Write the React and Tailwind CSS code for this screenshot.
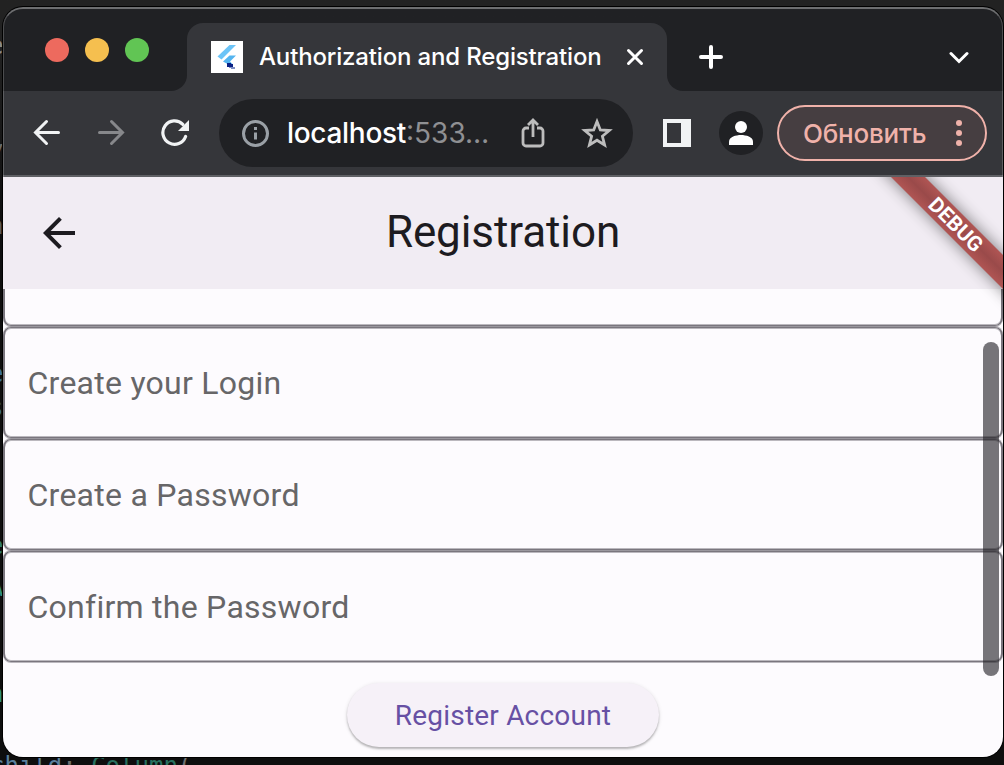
const fields = ['Create your Login', 'Create a Password', 'Confirm the Password'];

const fieldBox =
  'rounded-[8px] border-x-2 border-y border-[#7a767e] shadow-[0_1px_0_#7a767e80,0_-1px_0_#7a767e80,inset_0_1px_0_#7a767e80,inset_0_-1px_0_#7a767e80]';

const gutter = [
  ['e', 32, '#8a8a8a'],
  ['y', 136, '#6a6a6a'],
  ['n', 212, '#5c5c5c'],
  ['e', 360, '#3a6d94'],
  ['s', 394, '#3a6d94'],
  ['e', 532, '#2f7a68'],
  ['A', 574, '#2f8f78'],
  ['n', 680, '#2f8f78'],
];

function Favicon() {
  return (
    <svg className="h-8 w-8 shrink-0 bg-white" viewBox="0 0 32 32">
      <path d="M18.500 4H25L10.500 18.500 6.500 15.500z" fill="#6cc4f7" />
      <path d="M18.500 14.500H25L19 20.500l2.500 2.500h-5L12 20.500z" fill="#55b5f0" />
      <path d="M16 22h4v1h2v3h-6z" fill="#0b2185" />
      <path d="M18 26v1h2v1h4v-2z" fill="#7d8fc4" />
    </svg>
  );
}

function TabStrip() {
  return (
    <div className="flex h-[84px] bg-[#35363a]">
      <div className="flex w-[184px] gap-4 rounded-br-[16px] bg-[#202124] pl-[42px] pt-[31px]">
        <span className="h-6 w-6 rounded-full bg-[#ed6a5e]" />
        <span className="h-6 w-6 rounded-full bg-[#f5bf4f]" />
        <span className="h-6 w-6 rounded-full bg-[#61c554]" />
      </div>
      <div className="w-[480px] bg-linear-to-b from-[#202124] from-50% to-[#35363a] to-50% pt-4">
        <div className="flex h-[68px] items-center rounded-t-[16px] bg-[#35363a] pl-6">
          <Favicon />
          <span className="ml-4 w-[367px] whitespace-nowrap font-[Inter,sans-serif] text-[24px] font-medium tracking-[-0.16px] text-white">
            Authorization and Registration
          </span>
          <svg className="h-[18px] w-[18px]" viewBox="0 0 18 18" stroke="#fff" strokeWidth="3" strokeLinecap="round">
            <path d="M2.500 2.500l13 13M15.500 2.500l-13 13" />
          </svg>
        </div>
      </div>
      <div className="flex flex-1 items-center justify-between rounded-bl-[16px] bg-[#202124] pl-8 pr-[34px] pt-4">
        <svg className="h-6 w-6" viewBox="0 0 24 24" stroke="#fff" strokeWidth="4" strokeLinecap="round">
          <path d="M2 12h20M12 2v20" />
        </svg>
        <svg className="h-5 w-5" viewBox="0 0 20 20" fill="none" stroke="#fff" strokeWidth="3">
          <path d="M2 6.500l8 8 8-8" strokeLinecap="round" />
        </svg>
      </div>
    </div>
  );
}

function Toolbar() {
  return (
    <div className="flex h-[86px] items-center border-b-2 border-[#5f6064] bg-[#35363a] pl-[30px] pr-4">
      <svg className="h-7 w-7" viewBox="0 0 28 28" fill="none" stroke="#f1f3f4" strokeWidth="3" strokeLinecap="round">
        <path d="M25.500 13.500H3M13.500 2.500l-11 11 11 11" />
      </svg>
      <svg className="ml-9 h-7 w-7" viewBox="0 0 28 28" fill="none" stroke="#87888b" strokeWidth="3" strokeLinecap="round">
        <path d="M2.500 13.500H25M14.500 2.500l11 11-11 11" />
      </svg>
      <svg className="ml-9 h-7 w-7" viewBox="0 0 28 28" fill="none">
        <path d="M24.600 17.500A11.700 11.700 0 1 1 21.800 5.300" stroke="#f1f3f4" strokeWidth="3.200" strokeLinecap="round" />
        <path d="M28 1v11H17z" fill="#f1f3f4" />
      </svg>
      <div className="ml-[30px] flex h-[68px] w-[414px] items-center rounded-full bg-[#202124] pl-[22px]">
        <svg className="h-[28px] w-[28px] shrink-0" viewBox="0 0 28 28">
          <circle cx="14.500" cy="14.500" r="12" fill="none" stroke="#9aa0a6" strokeWidth="3" />
          <path d="M13 13.500h3v7h-3zM13 8h3v3h-3z" fill="#9aa0a6" />
        </svg>
        <span className="ml-[18px] w-[232px] whitespace-nowrap font-[Inter,sans-serif] text-[28px] tracking-[0px] text-white">
          <span className="font-medium tracking-[-0.3px]">localhost</span>
          <span className="text-[#8f9093]">:533…</span>
        </span>
        <svg className="ml-[2px] h-8 w-6" viewBox="0 0 24 32" fill="none" stroke="#bdbdbd" strokeWidth="2.800">
          <path d="M8 11H5a3 3 0 0 0-3 3v12a3 3 0 0 0 3 3h14a3 3 0 0 0 3-3V14a3 3 0 0 0-3-3h-3M12 20V3.500M7 8l5-5 5 5" />
        </svg>
        <svg className="ml-[36px] h-8 w-8" viewBox="0 0 32 32" fill="none" stroke="#bdbdbd" strokeWidth="2.800">
          <path d="M16 4.500l3.300 8.400 9 .6-6.900 5.800 2.200 8.700-7.600-4.800L8.400 28l2.200-8.700-6.900-5.800 9-.6z" />
        </svg>
      </div>
      <svg className="ml-[30px] h-7 w-7" viewBox="0 0 28 28">
        <path d="M0 0h28v28H0zM4 4v20h14V4z" fill="#f1f3f4" fillRule="evenodd" />
      </svg>
      <span className="ml-7 flex h-11 w-11 items-center justify-center rounded-full bg-[#202124]">
        <svg className="h-6 w-6" viewBox="0 0 24 24" fill="#fff">
          <circle cx="12" cy="6" r="6" />
          <path d="M0 24v-3.500C0 16 7 14 12 14s12 2 12 6.500V24z" />
        </svg>
      </span>
      <div className="ml-[14px] flex h-14 w-[210px] items-center justify-between rounded-full border-2 border-[#f0b2aa] bg-[#463e41] pl-6 pr-[23px] text-[#f0b2aa]">
        <span className="whitespace-nowrap font-[Inter,sans-serif] text-[26px] font-medium tracking-[-0.2px]">Обновить</span>
        <svg className="h-[26px] w-[6px]" viewBox="0 0 6 26" fill="currentColor">
          <circle cx="3" cy="3" r="3" />
          <circle cx="3" cy="13" r="3" />
          <circle cx="3" cy="23" r="3" />
        </svg>
      </div>
    </div>
  );
}

function DebugBanner() {
  return (
    <div className="absolute right-0 top-0 h-[150px] w-[150px] overflow-hidden">
      <div className="absolute left-[2px] top-[35px] h-6 w-[200px] rotate-45 bg-black/50 blur-[8px]" />
      <div className="absolute left-[2px] top-[35px] flex h-6 w-[200px] rotate-45 items-center justify-center bg-linear-to-b from-[#b05553] via-[#9a4a4a] to-[#b05553] pl-[2px] font-[Roboto,sans-serif] text-[21px] font-bold leading-none text-white">
        DEBUG
      </div>
    </div>
  );
}

function RegistrationPage() {
  return (
    <div className="relative flex-1 bg-[#fdfbfe] font-[Roboto,sans-serif]">
      <header className="flex h-28 items-center bg-[#f1ecf3] pl-10">
        <svg className="h-8 w-8 text-[#1d1b20]" viewBox="4 4 16 16" fill="currentColor">
          <path d="M20 11H7.830l5.590-5.590L12 4l-8 8 8 8 1.410-1.410L7.830 13H20v-2z" />
        </svg>
        <h1 className="flex-1 pb-[2px] pr-[72px] text-center text-[44px] leading-none tracking-[-0.1px] text-[#1d1b20]">
          Registration
        </h1>
      </header>
      <div className="flex flex-col">
        <div className="h-[38px] overflow-hidden">
          <div className={'-mt-[74px] h-[111px] ' + fieldBox} />
        </div>
        {fields.map((label) => (
          <div key={label} className={'mb-px flex h-[111px] items-center pl-[22.5px] text-[32px] tracking-[0.26px] text-[#676668] ' + fieldBox}>
            {label}
          </div>
        ))}
      </div>
      <div className="flex justify-center pt-[20px]">
        <button className="h-16 w-[312px] rounded-full bg-[#f6f1f8] pt-[2px] text-[28px] tracking-[0.2px] text-[#6750a4] shadow-[0_2px_2px_rgba(0,0,0,0.22),0_1px_4px_rgba(0,0,0,0.12)]">
          Register Account
        </button>
      </div>
      <div className="absolute right-1 top-[165px] h-[334px] w-4 rounded-full bg-[#1d1b20]/60" />
      <DebugBanner />
    </div>
  );
}

export default function App() {
  return (
    <div className="relative h-[765px] w-[1004px] overflow-hidden bg-linear-to-b from-[#222222] from-5% to-[#0e0e0e] to-30% pl-[3px] pt-[7px]">
      {gutter.map(([ch, top, color], i) => (
        <span
          key={i}
          className="absolute left-[-11px] font-['DejaVu_Sans_Mono',monospace] text-[24px] leading-[28px]"
          style={{ top, color }}
        >
          {ch}
        </span>
      ))}
      <span className="absolute left-[-10px] top-[752px] whitespace-pre font-['DejaVu_Sans_Mono',monospace] text-[24px] leading-[28px] text-[#5a7f9c]">
        child<span className="text-[#707070]">: </span>
        <span className="text-[#28705f]">Column</span>
        <span className="text-[#707070]">(</span>
      </span>
      <div className="relative flex h-[750px] w-[1000px] flex-col overflow-hidden rounded-[20px] shadow-[0_0_0_1px_#000]">
        <TabStrip />
        <Toolbar />
        <RegistrationPage />
        <div className="pointer-events-none absolute inset-x-0 top-0 h-[170px] rounded-t-[20px] border-x border-t-2 border-x-white/20 border-t-white/35" />
      </div>
    </div>
  );
}
